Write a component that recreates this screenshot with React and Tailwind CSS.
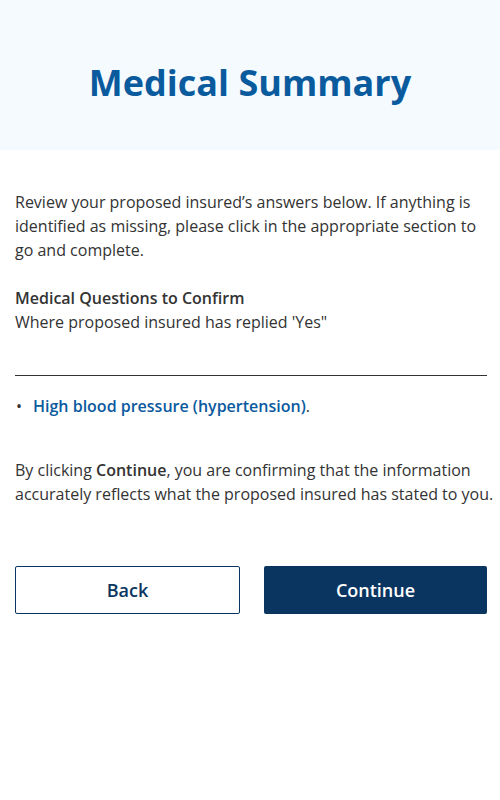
export default function App() {
  return (
    <div className="w-[500px] min-h-[800px] bg-white text-[#333333]" style={{ fontFamily: '"Open Sans", sans-serif' }}>
      <div className="h-[150px] bg-[#f5faff] flex items-center justify-center pt-[16px]">
        <h1 className="text-[36px] font-bold text-[#0a5a9e] leading-none">Medical Summary</h1>
      </div>
      <div className="pl-[15px] pr-[4px] pt-[40px]">
        <p className="text-[16px] leading-[24px]">
          Review your proposed insured’s answers below. If anything is identified as missing, please click in the appropriate section to go and complete.
        </p>
        <p className="mt-[24px] text-[16px] leading-[24px] font-semibold">Medical Questions to Confirm</p>
        <p className="text-[16px] leading-[24px]">Where proposed insured has replied 'Yes"</p>
        <div className="mt-[41px] mr-[9px] border-t border-[#333333]"></div>
        <div className="mt-[18px] flex items-center text-[16px] leading-[24px]">
          <span className="w-[18px] pl-[1px]">•</span>
          <span><span className="font-semibold text-[#0a5a9e]">High blood pressure (hypertension)</span>.</span>
        </div>
        <p className="mt-[40px] text-[16px] leading-[24px]">
          By clicking <span className="font-semibold">Continue</span>, you are confirming that the information accurately reflects what the proposed insured has stated to you.
        </p>
        <div className="mt-[60px] mr-[9px] flex gap-[24px]">
          <button className="flex-1 h-[48px] border border-[#0a3560] rounded-[2px] bg-white text-[#0a3560] text-[18px] font-semibold">Back</button>
          <button className="flex-1 h-[48px] rounded-[2px] bg-[#0a3560] text-white text-[18px] font-semibold">Continue</button>
        </div>
      </div>
    </div>
  );
}
